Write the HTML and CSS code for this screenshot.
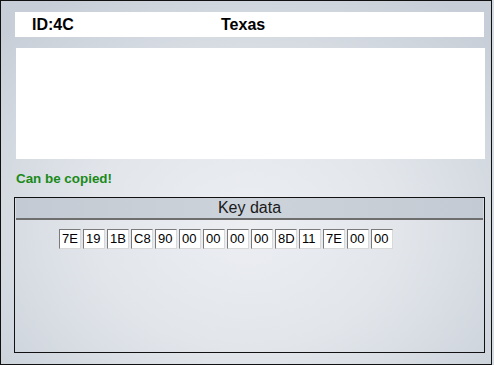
FILE: index.html
```html
<!DOCTYPE html>
<html lang="en">
<head>
  <meta charset="UTF-8" />
  <title>Key reader</title>
  <link rel="stylesheet" href="styles.css">
</head>
<body>
  <div class="window">
    <div class="title-bar">
      <span class="key-id">ID:4C</span>
      <span class="key-name">Texas</span>
    </div>

    <div class="info-box"></div>

    <p class="status">Can be copied!</p>

    <div class="group">
      <div class="group-title">Key data</div>
      <div class="cells">
        <span class="cell">7E</span>
        <span class="cell">19</span>
        <span class="cell">1B</span>
        <span class="cell">C8</span>
        <span class="cell">90</span>
        <span class="cell">00</span>
        <span class="cell">00</span>
        <span class="cell">00</span>
        <span class="cell">00</span>
        <span class="cell">8D</span>
        <span class="cell">11</span>
        <span class="cell">7E</span>
        <span class="cell">00</span>
        <span class="cell">00</span>
      </div>
    </div>
  </div>
</body>
</html>
```

FILE: styles.css
```css
body {
  margin: 0;
  width: 494px;
  height: 365px;
  background: #d6dbe2;
  font-family: "Liberation Sans", Arial, sans-serif;
}
.window {
  box-sizing: border-box;
  width: 492px;
  height: 365px;
  border: 1px solid #111;
  padding-top: 11px;
  background: radial-gradient(ellipse 70% 75% at 50% 62%, #eceef2 0%, #e2e6eb 45%, #c7ced7 100%);
}
.title-bar {
  display: flex;
  align-items: center;
  width: 469px;
  height: 25px;
  margin-left: 14px;
  background: #fff;
  font-size: 16px;
  font-weight: bold;
  line-height: 25px;
  color: #000;
}
.key-id {
  width: 189px;
  padding-left: 17px;
}
.info-box {
  width: 469px;
  height: 111px;
  margin: 11px 0 0 15px;
  background: #fff;
}
.status {
  margin: 12px 0 0 15px;
  font-size: 13.4px;
  font-weight: bold;
  line-height: 16px;
  color: #1a8a1a;
}
.group {
  box-sizing: border-box;
  width: 471px;
  height: 156px;
  margin: 10px 0 0 13px;
  border: 1px solid #111;
}
.group-title {
  height: 20px;
  margin: 0 1px;
  border-bottom: 2px solid #6e6e6e;
  background: linear-gradient(to right, #c3cad3, #cdd3da 50%, #c3cad3);
  text-align: center;
  font-size: 16px;
  line-height: 20px;
  color: #1a1a1a;
}
.cells {
  display: flex;
  gap: 2px;
  padding: 9px 0 0 44px;
}
.cell {
  box-sizing: border-box;
  width: 22px;
  height: 20px;
  padding-left: 2px;
  border-top: 1px solid #7a7a7a;
  border-left: 1px solid #7a7a7a;
  border-right: 1px solid #d8d8d8;
  border-bottom: 1px solid #d8d8d8;
  background: #fff;
  font-size: 13px;
  line-height: 18px;
  color: #000;
}
```
